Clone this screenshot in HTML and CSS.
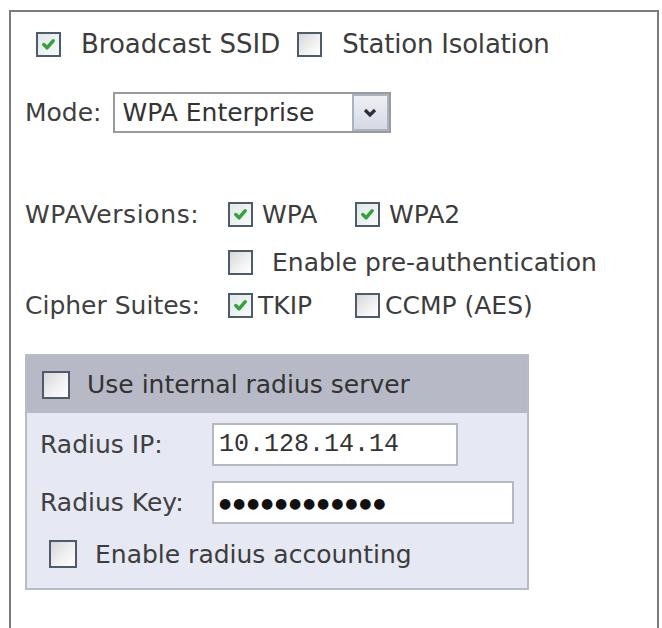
FILE: index.html
```html
<!DOCTYPE html>
<html>
<head>
<meta charset="utf-8">
<link rel="stylesheet" href="styles.css">
</head>
<body>
<div class="frame">
  <div class="row row-top">
    <label class="opt"><span class="cb checked"><svg viewBox="0 0 20 20"><path d="M5 10 L8.5 13.5 L15 6" /></svg></span>Broadcast SSID</label>
    <label class="opt opt-gap"><span class="cb"></span>Station Isolation</label>
  </div>
  <div class="row row-mode">
    <span class="lbl">Mode:</span>
    <div class="select">
      <span class="select-text">WPA Enterprise</span>
      <span class="select-btn"><svg viewBox="0 0 20 20"><path d="M5 7 L10 12 L15 7" /></svg></span>
    </div>
  </div>
  <div class="grid">
    <span class="lbl g-lbl wide">WPAVersions:</span>
    <div class="g-opts">
      <label class="opt w1"><span class="cb checked"><svg viewBox="0 0 20 20"><path d="M5 10 L8.5 13.5 L15 6" /></svg></span>WPA</label>
      <label class="opt"><span class="cb checked"><svg viewBox="0 0 20 20"><path d="M5 10 L8.5 13.5 L15 6" /></svg></span>WPA2</label>
    </div>
    <span></span>
    <div class="g-opts">
      <label class="opt pre"><span class="cb"></span>Enable pre-authentication</label>
    </div>
    <span class="lbl g-lbl">Cipher Suites:</span>
    <div class="g-opts">
      <label class="opt w1 tight"><span class="cb checked"><svg viewBox="0 0 20 20"><path d="M5 10 L8.5 13.5 L15 6" /></svg></span>TKIP</label>
      <label class="opt tight"><span class="cb"></span>CCMP (AES)</label>
    </div>
  </div>
  <div class="panel">
    <div class="panel-head">
      <label class="opt"><span class="cb big"></span>Use internal radius server</label>
    </div>
    <div class="panel-body">
      <div class="prow">
        <span class="plbl">Radius IP:</span>
        <span class="input ip">10.128.14.14</span>
      </div>
      <div class="prow">
        <span class="plbl">Radius Key:</span>
        <span class="input key">&#9679;&#9679;&#9679;&#9679;&#9679;&#9679;&#9679;&#9679;&#9679;&#9679;&#9679;&#9679;</span>
      </div>
      <div class="prow acct">
        <label class="opt"><span class="cb big"></span>Enable radius accounting</label>
      </div>
    </div>
  </div>
</div>
</body>
</html>
```

FILE: styles.css
```css
html, body {
  margin: 0;
  padding: 0;
  background: #ffffff;
  height: 100%;
}
body {
  font-family: "DejaVu Sans", Verdana, sans-serif;
  font-size: 25px;
  color: #3c3c3c;
  overflow: hidden;
}
.frame {
  margin: 10px 3px 0 9px;
  border: 2px solid #7c7c7c;
  border-bottom: none;
  height: 640px;
  padding: 18px 0 0 14px;
  box-sizing: border-box;
}
.row {
  display: flex;
  align-items: center;
}
.row-top {
  height: 28px;
  padding-left: 11px;
  font-size: 26px;
}
.opt {
  display: inline-flex;
  align-items: center;
  white-space: nowrap;
}
.opt-gap {
  margin-left: 17px;
  letter-spacing: -0.2px;
}
.cb {
  display: inline-block;
  width: 21px;
  height: 21px;
  border: 2px solid #4d5b6a;
  background: linear-gradient(135deg, #d6d7db 0%, #f2f2f2 60%, #ffffff 100%);
  margin-right: 20px;
  position: relative;
  flex: none;
}
.cb.checked {
  background: linear-gradient(135deg, #e0e8e8 0%, #f6fafa 100%);
}
.cb svg {
  position: absolute;
  left: 1px;
  top: 1px;
  width: 19px;
  height: 19px;
}
.cb svg path {
  fill: none;
  stroke: #34a03e;
  stroke-width: 3.6;
  stroke-linecap: round;
  stroke-linejoin: round;
}
.row-mode {
  margin-top: 34px;
  height: 41px;
}
.lbl {
  color: #404040;
}
.select {
  margin-left: 11px;
  width: 278px;
  height: 41px;
  box-sizing: border-box;
  border: 2px solid #9a9a9a;
  display: flex;
  align-items: center;
  background: #fff;
}
.select-text {
  flex: 1;
  padding-left: 8px;
  color: #333;
}
.select-btn {
  width: 37px;
  height: 37px;
  box-sizing: border-box;
  border: 2px solid #a9b3c4;
  background: linear-gradient(180deg, #eef0f5 0%, #d5d9e3 100%);
  display: flex;
  align-items: center;
  justify-content: center;
}
.select-btn svg {
  width: 20px;
  height: 20px;
}
.select-btn svg path {
  fill: none;
  stroke: #2e2e3a;
  stroke-width: 3.2;
}
.grid {
  margin-top: 67px;
  display: grid;
  grid-template-columns: 203px auto;
}
.g-lbl {
  display: flex;
  align-items: center;
  height: 28px;
}
.wide {
  letter-spacing: 0.6px;
}
.g-opts {
  display: flex;
  align-items: center;
  height: 28px;
  margin-bottom: 20px;
}
.grid > :nth-child(1),
.grid > :nth-child(3) {
  margin-bottom: 20px;
}
.grid > :nth-child(4) {
  margin-bottom: 15px;
}
.g-opts .cb {
  margin-right: 9px;
}
.w1 {
  width: 127px;
}
.pre .cb {
  margin-right: 19px;
}
.tight .cb {
  margin-right: 5px;
}
.panel {
  margin-top: 15px;
  width: 504px;
  box-sizing: border-box;
  border: 2px solid #b9bcc6;
  background: #e6e8f3;
}
.panel-head {
  background: #b7bac6;
  height: 57px;
  display: flex;
  align-items: center;
  padding-left: 15px;
  color: #333;
}
.cb.big {
  width: 24px;
  height: 24px;
  margin-right: 17px;
}
.panel-body {
  padding: 10px 0 19px 13px;
}
.prow {
  display: flex;
  align-items: center;
  height: 43px;
  margin-bottom: 15px;
}
.plbl {
  width: 172px;
  color: #404040;
}
.input {
  height: 43px;
  box-sizing: border-box;
  border: 2px solid #b5b9c2;
  background: #fff;
  display: flex;
  align-items: center;
  padding-left: 5px;
  font-family: "Liberation Mono", "Courier New", monospace;
  color: #333;
  font-size: 25px;
}
.ip {
  width: 246px;
}
.key {
  width: 302px;
  font-family: "DejaVu Sans", sans-serif;
  font-size: 14px;
  letter-spacing: 1.8px;
  color: #111;
}
.acct {
  margin-bottom: 0;
  height: 30px;
  padding-left: 9px;
}
.acct .cb.big {
  margin-right: 18px;
}
```
